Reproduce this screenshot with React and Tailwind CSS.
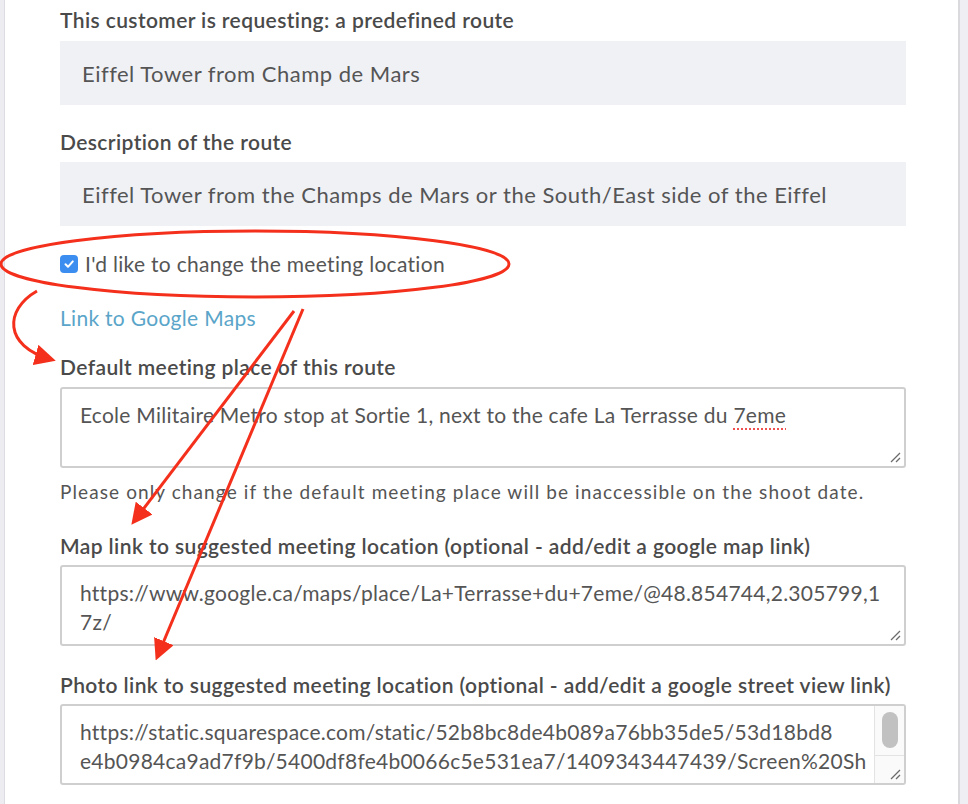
import React from "react";

const font = { fontFamily: "Lato, 'Open Sans', sans-serif" };

function Grip() {
    return (
        <svg className="absolute bottom-[3px] right-[3px]" width="12" height="12" viewBox="0 0 12 12">
            <line x1="2" y1="11" x2="11" y2="2" stroke="#6b6b6b" strokeWidth="1.2" />
            <line x1="7" y1="11" x2="11" y2="7" stroke="#6b6b6b" strokeWidth="1.2" />
        </svg>
    );
}

function Label({ children, className = "" }) {
    return (
        <p className={"text-[21px] leading-6 font-semibold tracking-[0.4px] text-[#4a4a4a] whitespace-nowrap " + className}>
            {children}
        </p>
    );
}

function ReadBox({ children, className = "" }) {
    return (
        <div className={"flex h-16 items-center bg-[#f0f1f5] px-[22px] text-[22px] tracking-[0.5px] text-[#555] " + className}>
            {children}
        </div>
    );
}

function Area({ lines, className = "", scroll = false }) {
    return (
        <div className={"relative h-[81px] overflow-hidden rounded-[3px] border-2 border-[#cfcfcf] bg-white " + className}>
            <div className="pl-[18px] pt-[11px] text-[21px] leading-[29px] tracking-[0.25px] text-[#555] whitespace-nowrap">
                {lines.map((l, i) => (
                    <div key={i}>{l}</div>
                ))}
            </div>
            {scroll && (
                <div className="absolute right-0 top-0 flex h-full w-[30px] flex-col border-l border-[#e3e3e3] bg-[#fafafa]">
                    <div className="flex h-[50px] justify-center border-b border-[#e3e3e3] pt-[6px]">
                        <div className="h-[36px] w-[16px] rounded-full bg-[#c1c1c1]" />
                    </div>
                </div>
            )}
            <Grip />
        </div>
    );
}

export default function App() {
    return (
        <div className="relative flex h-[804px] w-[968px] overflow-hidden bg-white" style={font}>
            <div className="w-[5px] border-r border-[#dcdce2] bg-[#ececf1]" />

            <div className="flex-1 pl-[55px] pr-[52px]">
                <Label className="mt-2">This customer is requesting: a predefined route</Label>
                <ReadBox className="mt-[9px]">Eiffel Tower from Champ de Mars</ReadBox>

                <Label className="mt-[25px]">Description of the route</Label>
                <ReadBox className="mt-2">
                    Eiffel Tower from the Champs de Mars or the South/East side of the Eiffel
                </ReadBox>

                <label className="mt-[26px] flex h-6 items-center gap-[7px] text-[21px] tracking-[0.3px] text-[#555]">
                    <span className="flex h-[18px] w-[18px] items-center justify-center rounded-[4px] bg-[#3b8ef0]">
                        <svg width="12" height="12" viewBox="0 0 12 12">
                            <path d="M2.5 6.3 L5 8.8 L9.8 3.4" fill="none" stroke="#fff" strokeWidth="2" strokeLinecap="round" strokeLinejoin="round" />
                        </svg>
                    </span>
                    I'd like to change the meeting location
                </label>

                <a className="mt-[30px] block h-6 text-[21px] leading-6 tracking-[0.3px] text-[#5aa5c9]">Link to Google Maps</a>

                <Label className="mt-[25px]">Default meeting place of this route</Label>
                <Area
                    className="mt-2"
                    lines={[
                        <span key="a">
                            Ecole Militaire Metro stop at Sortie 1, next to the cafe La Terrasse du{" "}
                            <span className="underline decoration-dotted decoration-[#f05050] decoration-2 underline-offset-[5px]">7eme</span>
                        </span>,
                    ]}
                />
                <p className="mt-[13px] text-[19px] leading-[22px] tracking-[1.1px] text-[#555] whitespace-nowrap">
                    Please only change if the default meeting place will be inaccessible on the shoot date.
                </p>

                <Label className="mt-[31px]">Map link to suggested meeting location (optional - add/edit a google map link)</Label>
                <Area
                    className="mt-[7px]"
                    lines={["https://www.google.ca/maps/place/La+Terrasse+du+7eme/@48.854744,2.305799,1", "7z/"]}
                />

                <Label className="mt-[27px]">Photo link to suggested meeting location (optional - add/edit a google street view link)</Label>
                <Area
                    className="mt-[7px]"
                    scroll
                    lines={[
                        "https://static.squarespace.com/static/52b8bc8de4b089a76bb35de5/53d18bd8",
                        "e4b0984ca9ad7f9b/5400df8fe4b0066c5e531ea7/1409343447439/Screen%20Sh",
                        "ot%202014-08-27%20at%209.54.17%20AM.png",
                    ]}
                />
            </div>

            <div className="w-[10px] border-l-2 border-[#d9d9de] bg-[#efeff3]" />

            <svg className="pointer-events-none absolute left-0 top-0" width="968" height="804" viewBox="0 0 968 804">
                <defs>
                    <marker id="head" markerWidth="7" markerHeight="7" refX="5" refY="3.5" orient="auto" markerUnits="strokeWidth">
                        <polygon points="0 0, 7 3.5, 0 7" fill="#f4301c" />
                    </marker>
                </defs>
                <ellipse cx="255" cy="264" rx="254" ry="33" fill="none" stroke="#f4301c" strokeWidth="3" />
                <path d="M37 291 C 4 310, 4 346, 50 359" fill="none" stroke="#f4301c" strokeWidth="3" markerEnd="url(#head)" />
                <line x1="294" y1="311" x2="135" y2="520" stroke="#f4301c" strokeWidth="3" markerEnd="url(#head)" />
                <line x1="303" y1="309" x2="158" y2="655" stroke="#f4301c" strokeWidth="3" markerEnd="url(#head)" />
            </svg>
        </div>
    );
}
